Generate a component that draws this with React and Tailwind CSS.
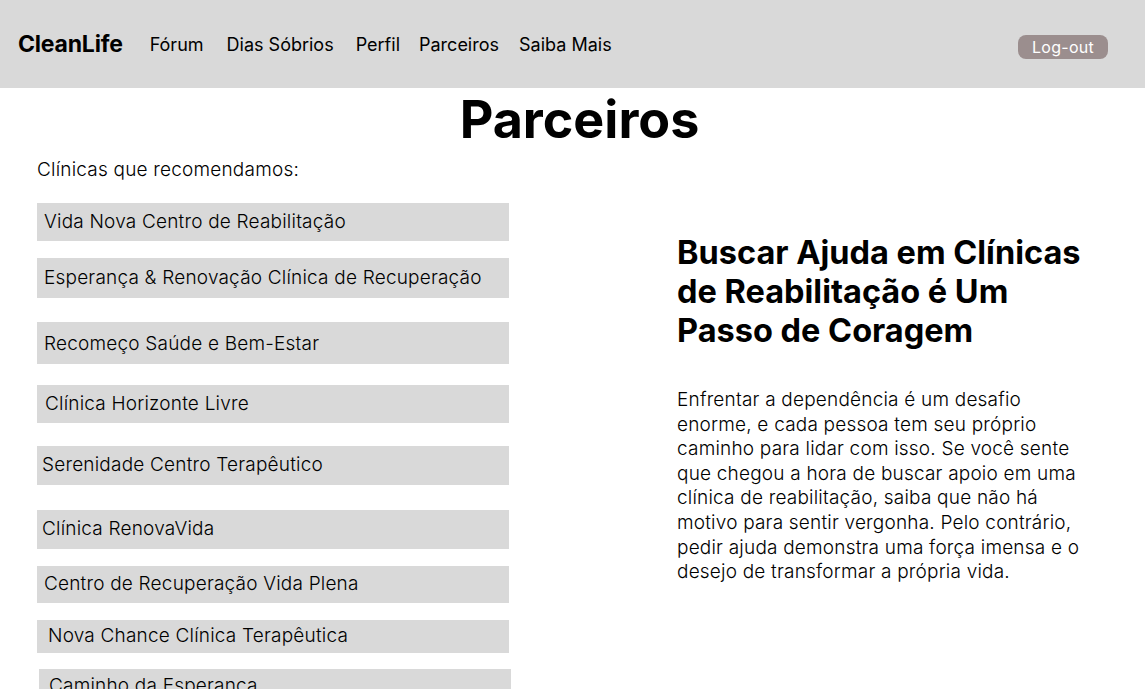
import React from 'react';

const navLinks = [
  { label: 'Fórum', gap: 'ml-0' },
  { label: 'Dias Sóbrios', gap: 'ml-[23px]' },
  { label: 'Perfil', gap: 'ml-[22px]' },
  { label: 'Parceiros', gap: 'ml-[19px]' },
  { label: 'Saiba Mais', gap: 'ml-[20px]' },
];

// each clinic box sits a bit unevenly in the mockup, so spacing is per item
const clinics = [
  { name: 'Vida Nova Centro de Reabilitação', box: 'mt-[21px] h-[38px] pl-[7px]' },
  { name: 'Esperança & Renovação Clínica de Recuperação', box: 'mt-[17px] h-[40px] pl-[7px]' },
  { name: 'Recomeço Saúde e Bem-Estar', box: 'mt-[24px] h-[42px] pl-[7px] pt-[2px]' },
  { name: 'Clínica Horizonte Livre', box: 'mt-[21px] h-[38px] pl-[8px]' },
  { name: 'Serenidade Centro Terapêutico', box: 'mt-[23px] h-[39px] pl-[5px]' },
  { name: 'Clínica RenovaVida', box: 'mt-[25px] h-[39px] pl-[5px]' },
  { name: 'Centro de Recuperação Vida Plena', box: 'mt-[17px] h-[37px] pl-[7px]' },
  { name: 'Nova Chance Clínica Terapêutica', box: 'mt-[17px] h-[33px] pl-[11px]' },
  { name: 'Caminho da Esperança', box: 'mt-[16px] h-[38px] pl-[10px] ml-[2px] w-[469px] items-start pt-[3px]' },
];

const Header = () => (
  <header className="h-[88px] bg-[#d9d9d9] flex items-center justify-between pl-[18px] pr-[37px]">
    <div className="flex items-center">
      <span className="text-[23px] font-bold text-black tracking-[-0.2px]">CleanLife</span>
      <nav className="flex items-center ml-[27px] text-[18px] text-black">
        {navLinks.map(link => (
          <a key={link.label} href="#" onClick={(e) => e.preventDefault()} className={link.gap}>{link.label}</a>
        ))}
      </nav>
    </div>
    <button className="h-[24px] w-[90px] rounded-[8px] bg-[#9b8e8e] text-white text-[16px] tracking-[0.3px] leading-none mt-[5px]">Log-out</button>
  </header>
);

const App = () => {
  return (
    <div className="h-[689px] overflow-hidden bg-white text-black font-['Inter','Liberation_Sans',sans-serif]">
      <Header />
      <h1 className="text-[52px] font-bold leading-none text-center pl-[14px] mt-[6px]">Parceiros</h1>
      <div className="flex mt-[8px]">
        <div className="w-[509px] pl-[37px]">
          <p className="text-[19px] font-light tracking-[0.2px] leading-[24px] mt-[4px]">Clínicas que recomendamos:</p>
          <div className="flex flex-col font-light tracking-[0.2px]">
            {clinics.map(c => (
              <div key={c.name} className={`bg-[#d9d9d9] flex items-center text-[19px] w-[472px] ${c.box}`}>
                {c.name}
              </div>
            ))}
          </div>
        </div>
        <div className="ml-[168px] w-[420px] pt-[79px]">
          <h2 className="text-[32.5px] font-bold leading-[39px]">
            Buscar Ajuda em Clínicas de Reabilitação é Um Passo de Coragem
          </h2>
          <p className="mt-[38px] text-[19px] font-light tracking-[0.2px] leading-[24.6px] text-black">
            Enfrentar a dependência é um desafio enorme, e cada pessoa tem seu próprio caminho para lidar com isso. Se você sente que chegou a hora de buscar apoio em uma clínica de reabilitação, saiba que não há motivo para sentir vergonha. Pelo contrário, pedir ajuda demonstra uma força imensa e o desejo de transformar a própria vida.
          </p>
        </div>
      </div>
    </div>
  );
};

export default App;
